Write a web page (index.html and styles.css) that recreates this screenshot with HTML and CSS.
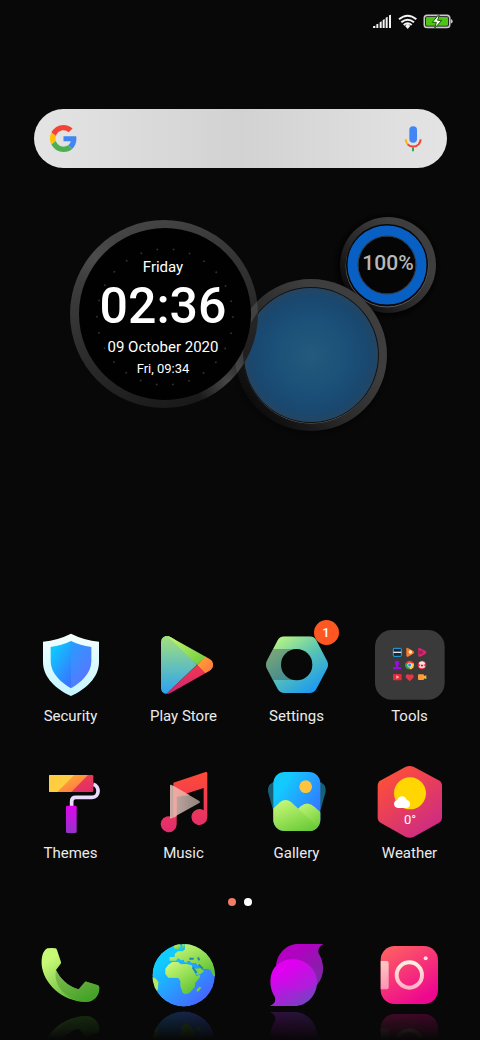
FILE: index.html
```html
<!DOCTYPE html>
<html lang="en">
<head>
    <meta charset="UTF-8">
    <meta name="viewport" content="width=device-width, initial-scale=1.0">
    <title>Home Screen</title>
    <link rel="stylesheet" href="styles.css">
</head>
<body>
    <div class="home">
        <header class="status">
            <svg width="82" height="15" viewBox="36 42 246 45" aria-label="Signal, Wi-Fi, battery charging">
                <g fill="#f2f2f2">
                    <path d="M39 84v-5l7-2v7zM49 73l6-2v13h-6zM59 67l6-3v20h-6zM68 60l6-3v27h-6zM77 53l6-3v34h-6zM87 46l6-2v40h-6z"/>
                    <path d="M136 79a7 7 0 0 1 14 0l-7 8z"/>
                </g>
                <g fill="none" stroke="#f2f2f2" stroke-width="6">
                    <path d="M117 58q26-22 52 0M124 67q19-16 38 0M131 75q12-10 24 0"/>
                </g>
                <rect x="193" y="46" width="76" height="36" rx="8" fill="#080808" stroke="#c9c9c9" stroke-width="5"/>
                <rect x="198" y="51" width="66" height="26" rx="3" fill="#4fc414"/>
                <path d="M272 57q6 1 6 7t-6 7z" fill="#c9c9c9"/>
                <path d="M236 44l-19 23h12l-5 18 21-24h-12l5-17z" fill="#fff" stroke="#175a05" stroke-width="3"/>
            </svg>
        </header>

        <form class="search">
            <button type="button" aria-label="Google">
                <svg width="27" height="27" viewBox="0 0 48 48">
                    <path fill="#f44336" d="M24 9.5c3.54 0 6.71 1.22 9.21 3.6l6.85-6.85C35.9 2.38 30.47 0 24 0 14.62 0 6.51 5.38 2.56 13.22l7.98 6.19C12.43 13.72 17.74 9.5 24 9.5z"/>
                    <path fill="#4285f4" d="M46.98 24.55c0-1.57-.15-3.09-.38-4.55H24v9.02h12.94c-.58 2.96-2.26 5.48-4.78 7.18l7.73 6c4.51-4.18 7.09-10.36 7.09-17.65z"/>
                    <path fill="#ffc107" d="M10.53 28.59c-.48-1.45-.76-2.99-.76-4.59s.27-3.14.76-4.59l-7.98-6.19C.92 16.46 0 20.12 0 24c0 3.88.92 7.54 2.56 10.78l7.97-6.19z"/>
                    <path fill="#4caf50" d="M24 48c6.48 0 11.93-2.13 15.89-5.81l-7.73-6c-2.15 1.45-4.92 2.3-8.16 2.3-6.26 0-11.57-4.22-13.47-9.91l-7.98 6.19C6.51 42.62 14.62 48 24 48z"/>
                </svg>
            </button>
            <input type="text" aria-label="Search">
            <button type="button" aria-label="Voice search">
                <svg width="18" height="26" viewBox="0 0 54 78">
                    <rect x="16" y="1" width="23" height="49" rx="11" fill="#4285f4"/>
                    <path d="M5 40c0 7 3 12 7 16" fill="none" stroke="#ffb300" stroke-width="6"/>
                    <path d="M11 55c9 9 24 9 33 0 3-4 6-8 6-15" fill="none" stroke="#f44336" stroke-width="6"/>
                    <path d="M24 64h6v12h-6z" fill="#34a853"/>
                </svg>
            </button>
        </form>

        <section class="widget">
            <svg class="dials" width="410" height="230" viewBox="35 210 410 230" aria-hidden="true">
                <defs>
                    <linearGradient id="rim" x1=".2" y1="0" x2=".6" y2="1">
                        <stop offset="0" stop-color="#484848"/>
                        <stop offset=".5" stop-color="#303030"/>
                        <stop offset="1" stop-color="#191919"/>
                    </linearGradient>
                    <linearGradient id="rim2" x1=".1" y1=".8" x2=".7" y2=".3">
                        <stop offset="0" stop-color="#0c0c0c"/>
                        <stop offset=".5" stop-color="#2a2a2a"/>
                        <stop offset="1" stop-color="#3e3e3e"/>
                    </linearGradient>
                    <radialGradient id="glow">
                        <stop offset="0" stop-color="#666" stop-opacity=".6"/>
                        <stop offset="1" stop-color="#666" stop-opacity="0"/>
                    </radialGradient>
                    <radialGradient id="glass">
                        <stop offset="0" stop-color="#245a7c"/>
                        <stop offset=".55" stop-color="#1b5078"/>
                        <stop offset=".85" stop-color="#194870"/>
                        <stop offset="1" stop-color="#234562"/>
                    </radialGradient>
                    <radialGradient id="shade">
                        <stop offset=".88" stop-color="#000"/>
                        <stop offset="1" stop-color="#000" stop-opacity="0"/>
                    </radialGradient>
                    <clipPath id="face"><circle cx="164" cy="314" r="94"/></clipPath>
                </defs>
                <circle cx="387" cy="266" r="55" fill="url(#shade)" opacity=".6"/>
                <circle cx="388" cy="265" r="48" fill="url(#rim2)"/>
                <circle cx="387" cy="266" r="41" fill="#111" stroke="#5a5a5a"/>
                <circle cx="387" cy="265" r="41" fill="#070707"/>
                <circle cx="387" cy="265" r="34" fill="#050505" stroke="#0860c4" stroke-width="11"/>
                <circle cx="387" cy="265" r="29" fill="none" stroke="#333"/>

                <circle cx="311" cy="358" r="82" fill="url(#shade)" opacity=".4"/>
                <circle cx="311" cy="355" r="76" fill="url(#rim2)"/>
                <circle cx="311" cy="356" r="67" fill="#111" stroke="#706a62"/>
                <circle cx="311" cy="355" r="68" fill="#111"/>
                <circle cx="311" cy="355" r="67" fill="url(#glass)"/>

                <circle cx="164" cy="314" r="94" fill="url(#rim)"/>
                <g clip-path="url(#face)">
                    <circle cx="311" cy="355" r="72" fill="none" stroke="#fff" stroke-width="8" opacity=".12"/>
                    <circle cx="228" cy="382" r="32" fill="url(#glow)"/>
                    <circle cx="95" cy="258" r="28" fill="url(#glow)" opacity=".5"/>
                </g>
                <circle cx="165" cy="314" r="86" fill="#010101"/>
                <circle cx="165" cy="317" r="68" fill="none" stroke="#303030" stroke-width="2" stroke-linecap="round" stroke-dasharray="0 16.43"/>
            </svg>
            <div class="clock">
                <span class="day">Friday</span>
                <span class="time">02:36</span>
                <span class="date">09 October 2020</span>
                <span class="alarm">Fri, 09:34</span>
            </div>
            <span class="battery">100%</span>
        </section>

        <main class="apps">
            <a class="app" href="#">
                <svg viewBox="27 42 219 216">
                    <defs>
                        <linearGradient id="s1" x1="0" y1="0" x2="0" y2="1"><stop offset="0" stop-color="#f4fffc"/><stop offset="1" stop-color="#c4f5ff"/></linearGradient>
                        <linearGradient id="s2" x1="0" y1="0" x2=".7" y2="1"><stop offset=".2" stop-color="#0fc5ff"/><stop offset="1" stop-color="#3877ff"/></linearGradient>
                        <linearGradient id="s3" x1="0" y1="0" x2=".6" y2="1"><stop offset="0" stop-color="#269eff"/><stop offset="1" stop-color="#5d73ff"/></linearGradient>
                    </defs>
                    <path d="M138 56q40 20 84 24v61c0 48-42 83-84 102-42-19-84-54-84-102V80q44-4 84-24z" fill="url(#s1)"/>
                    <path d="M138 78v142c-30-17-61-45-61-81V96q33-4 61-18z" fill="url(#s2)"/>
                    <path d="M138 78v142c30-17 61-45 61-81V96q-33-4-61-18z" fill="url(#s3)"/>
                </svg>
                <span>Security</span>
            </a>
            <a class="app" href="#">
                <svg viewBox="366 42 219 216">
                    <defs>
                        <linearGradient id="p1" x1="0" y1="0" x2="0" y2="1"><stop offset="0" stop-color="#b3e96c"/><stop offset="1" stop-color="#27a1f5"/></linearGradient>
                        <linearGradient id="p2" x1="0" y1="0" x2="1" y2="1"><stop offset="0" stop-color="#d0ff80"/><stop offset="1" stop-color="#6bc936"/></linearGradient>
                        <linearGradient id="p3" x1="0" y1="0" x2="0" y2="1"><stop offset="0" stop-color="#f4374b"/><stop offset="1" stop-color="#d0247b"/></linearGradient>
                        <linearGradient id="p4" x1="0" y1="0" x2="1" y2="1"><stop offset="0" stop-color="#ffab35"/><stop offset="1" stop-color="#ff6c41"/></linearGradient>
                        <clipPath id="pc"><path d="M408 82c0-16 14-23 28-16l118 66c14 8 14 27 0 35l-118 67c-14 7-28-1-28-15z"/></clipPath>
                    </defs>
                    <g clip-path="url(#pc)">
                        <path d="M400 40h20l96 109-96 92h-20z" fill="url(#p1)"/>
                        <path d="M414 50h20l114 70-32 29z" fill="url(#p2)"/>
                        <path d="M516 149l30 28-110 62h-14z" fill="url(#p3)"/>
                        <path d="M516 149l30-30h30v60h-30z" fill="url(#p4)"/>
                    </g>
                </svg>
                <span>Play Store</span>
            </a>
            <a class="app" href="#">
                <svg viewBox="45 42 219 216">
                    <defs>
                        <linearGradient id="g1" x1=".1" y1="0" x2=".8" y2="1"><stop offset=".05" stop-color="#cbff79"/><stop offset=".5" stop-color="#59c3b4"/><stop offset="1" stop-color="#0d8fff"/></linearGradient>
                        <clipPath id="gc"><path d="M118 64h76q13 0 20 12l32 61q6 12 0 24l-32 61q-7 12-20 12h-76q-13 0-20-12l-32-61q-6-12 0-24l32-61q7-12 20-12z"/></clipPath>
                    </defs>
                    <g clip-path="url(#gc)">
                        <path d="M50 50h210v200H50z" fill="url(#g1)"/>
                        <path d="M50 102h106v93H50z" fill="#47545a" opacity=".45"/>
                    </g>
                    <circle cx="155" cy="149" r="47" fill="#080808"/>
                </svg>
                <em class="badge">1</em>
                <span>Settings</span>
            </a>
            <a class="app" href="#">
                <svg viewBox="384 42 219 216">
                    <rect x="390" y="45" width="209" height="209" rx="50" fill="#3a3a3a"/>
                    <rect x="445" y="100" width="24" height="24" rx="2" fill="#172536" stroke="#28a5e8" stroke-width="3"/>
                    <path d="M445 110h24v4h-24z" fill="#d9edf1"/>
                    <path d="M484 99q2-2 6 1l15 8q5 4 0 8l-16 9q-5 1-5-3z" fill="#fb7b31"/><circle cx="496" cy="111" r="5" fill="#fff3b5"/>
                    <path d="M520 99q2-2 6 1l16 8q5 4 0 8l-16 9q-6 1-6-3z" fill="#df2369"/><path d="M522 107h11v10h-11z" fill="#971f71"/>
                    <circle cx="456" cy="144" r="7" fill="#9d0be3"/><path d="M453 149h6v6l9 2v6h-24v-6l9-2z" fill="#9d0be3"/>
                    <circle cx="494" cy="150" r="13" fill="#f13b32"/><path d="M494 150l-12-6a13 13 0 0 0 9 19z" fill="#2ea84d"/><path d="M494 150v13a13 13 0 0 0 12-18h-12z" fill="#fccd2b"/><circle cx="494" cy="150" r="6" fill="#398be9" stroke="#fff" stroke-width="2"/>
                    <circle cx="531" cy="150" r="13" fill="#e42c3c"/><path d="M521 144q10-11 20 0l-4 7 4 5q-10 8-20 0l4-5z" fill="#fae4dd"/><path d="M526 149h10l-5 7z" fill="#cf1a32"/>
                    <rect x="444" y="177" width="26" height="19" rx="3" fill="#e22a3f"/><path d="M454 181l9 5-9 6z" fill="#ffb0a0"/>
                    <path d="M494 199l-11-11c-4-6 3-15 11-8 8-7 15 2 11 8z" fill="#ed3346"/>
                    <rect x="519" y="178" width="18" height="17" rx="3" fill="#ff9a37"/><path d="M535 184l9-3v11l-9-2z" fill="#ffb33c"/>
                </svg>
                <span>Tools</span>
            </a>
            <a class="app" href="#">
                <svg viewBox="27 33 219 216">
                    <defs>
                        <linearGradient id="t1" x1="0" y1="0" x2="0" y2="1"><stop offset="0" stop-color="#df06ef"/><stop offset="1" stop-color="#9532c8"/></linearGradient>
                        <linearGradient id="t2" x1="0" y1="0" x2="1" y2="1"><stop offset="0" stop-color="#f64742"/><stop offset="1" stop-color="#de2b6c"/></linearGradient>
                        <linearGradient id="t3" x1="0" y1="0" x2="1" y2="1"><stop offset="0" stop-color="#ffbb38"/><stop offset="1" stop-color="#ff6d42"/></linearGradient>
                        <clipPath id="tc"><rect x="72" y="60" width="133" height="51" rx="4"/></clipPath>
                    </defs>
                    <path d="M205 88c19 4 20 39-4 39h-49q-12 0-12 12v16" fill="none" stroke="#eadcfb" stroke-width="11"/>
                    <g clip-path="url(#tc)">
                        <path d="M70 58h140v56H70z" fill="url(#t2)"/>
                        <path d="M70 58h121l-55 56H70z" fill="url(#t3)"/>
                        <path d="M70 58h80l-56 56H70z" fill="#ffce40"/>
                    </g>
                    <rect x="123" y="152" width="32" height="82" rx="4" fill="url(#t1)"/>
                </svg>
                <span>Themes</span>
            </a>
            <a class="app" href="#">
                <svg viewBox="366 33 219 216">
                    <defs>
                        <linearGradient id="m1" x1="0" y1="0" x2="0" y2="1"><stop offset="0" stop-color="#ff4b35"/><stop offset="1" stop-color="#e12c70"/></linearGradient>
                        <linearGradient id="m2" x1="0" y1="0" x2="1" y2="0"><stop offset="0" stop-color="#e8c9bf"/><stop offset="1" stop-color="#aa9793"/></linearGradient>
                    </defs>
                    <path d="M445 83l97-32q5-1 5 4v132a24 24 0 1 1-11-21V99l-81 26v84a24 24 0 1 1-10-21z" fill="url(#m1)"/>
                    <path d="M435 93q0-5 5-3l83 48q4 3 0 6l-83 46q-5 2-5-3z" fill="url(#m2)" opacity=".85"/>
                    <path d="M445 92l50 29-40 4v59l-10 6z" fill="#f5a79e" opacity=".7"/>
                </svg>
                <span>Music</span>
            </a>
            <a class="app" href="#">
                <svg viewBox="45 33 219 216">
                    <defs>
                        <linearGradient id="a1" x1="0" y1=".2" x2="1" y2="1"><stop offset=".15" stop-color="#13caff"/><stop offset=".8" stop-color="#3475ff"/></linearGradient>
                        <linearGradient id="a2" x1="0" y1="0" x2=".6" y2="1"><stop offset="0" stop-color="#d0fc7f"/><stop offset="1" stop-color="#69ca36"/></linearGradient>
                        <clipPath id="ac"><rect x="85" y="51" width="141" height="177" rx="34"/></clipPath>
                    </defs>
                    <path d="M94 79q-27 5-25 31l16 58zM217 79q27 5 25 31l-16 58z" fill="#176078"/>
                    <g clip-path="url(#ac)">
                        <path d="M80 50h150v180H80z" fill="url(#a1)"/>
                        <circle cx="182" cy="95" r="19" fill="#ffc43d"/>
                        <path d="M145 175l22-21q21-18 42 2l22 20v60h-90z" fill="url(#a2)"/>
                        <path d="M80 165l25-23q17-14 34 0l90 84v10H80z" fill="url(#a2)"/>
                    </g>
                </svg>
                <span>Gallery</span>
            </a>
            <a class="app" href="#">
                <svg viewBox="384 33 219 216">
                    <defs>
                        <linearGradient id="w1" x1="0" y1="0" x2=".7" y2="1"><stop offset=".1" stop-color="#ff5035"/><stop offset="1" stop-color="#cd2b84"/></linearGradient>
                    </defs>
                    <path d="M481 36q13-6 26 0l74 40q10 6 10 16v96q0 10-10 16l-74 41q-13 6-26 0l-73-41q-10-6-10-16V92q0-10 10-16z" fill="url(#w1)"/>
                    <circle cx="495" cy="115" r="48" fill="#ffd602"/>
                    <path d="M459 159c-15-1-16-22-2-24 5-16 26-14 28 0 14 2 14 23 0 24z" fill="#fff"/>
                    <text x="495" y="207" text-anchor="middle" fill="#fff" font-size="39">0°</text>
                </svg>
                <span>Weather</span>
            </a>
        </main>

        <div class="pager">
            <i class="dot active"></i>
            <i class="dot"></i>
        </div>

        <nav class="dock">
            <a href="#" aria-label="Phone">
                <svg viewBox="33 153 207 204">
                    <defs>
                        <linearGradient id="d1" x1="0" y1="0" x2=".8" y2="1"><stop offset=".2" stop-color="#c8f976"/><stop offset="1" stop-color="#45a32a"/></linearGradient>
                        <linearGradient id="d2" x1="0" y1="0" x2=".3" y2="1"><stop offset="0" stop-color="#69a044"/><stop offset="1" stop-color="#43a026"/></linearGradient>
                    </defs>
                    <path d="M68 175q12-2 23 0 4 1 5 5l12 36q1 4-2 7l-13 17c12 25 36 50 68 58l18-21q2-3 6-2l34 11q4 2 4 7c0 25-16 42-41 43-73-3-127-57-132-112-1-24 4-42 17-49z" fill="url(#d1)"/>
                    <path d="M93 240c12 25 36 50 68 58l18-21q2-3 6-2l34 11q4 2 4 7c0 25-16 42-41 43-57-4-99-48-89-96z" fill="url(#d2)" opacity=".6"/>
                </svg>
            </a>
            <a href="#" aria-label="Browser">
                <svg viewBox="372 153 207 204">
                    <defs>
                        <linearGradient id="b1" x1=".1" y1=".2" x2=".8" y2="1"><stop offset=".1" stop-color="#10cbff"/><stop offset="1" stop-color="#4a5eff"/></linearGradient>
                        <linearGradient id="b2" x1="0" y1="0" x2=".7" y2="1"><stop offset=".1" stop-color="#c9f778"/><stop offset="1" stop-color="#5fc332"/></linearGradient>
                        <clipPath id="bc"><circle cx="476" cy="256" r="94"/></clipPath>
                    </defs>
                    <g clip-path="url(#bc)">
                        <circle cx="476" cy="256" r="94" fill="url(#b1)"/>
                        <path d="M434 212v-11h15v-9l10-8h14l7-6v-18h45l50 48v50h-10l-8-17-8-4-17-1-12-9-8-8h-13l-4-6h-8l-2 5-8-3v-6l-8 2-10-6-6 7z" fill="url(#b2)"/>
                        <path d="M446 160h20v13l-7 6-12-4zM472 160h7v12l-7 5z" fill="url(#b2)"/>
                        <path d="M421 236l9-12 12-8h17l9 7 17-1 15 4 9 22 6 10 11-4-2 9-13 15-2 13-8 10-9 9-11 3-8-5-7-20v-15l-6-9-30-1-9-11z" fill="url(#b2)"/>
                        <path d="M504 233l11 3 11-2 11 10-10 8-11 3z" fill="#81d63d"/>
                        <path d="M382 261l11 5 7 11-1 20-8 10-14-20z" fill="#b5e766"/>
                        <path d="M515 298l9-8 5 2-7 11-7 2z" fill="#76ce37"/>
                        <path d="M493 206h13M519 202l4 9M503 232l12 17M521 224l12 12" stroke="#178aba" stroke-width="6"/>
                    </g>
                </svg>
            </a>
            <a href="#" aria-label="Messages">
                <svg viewBox="51 153 207 204">
                    <defs>
                        <linearGradient id="c1" x1="0" y1="0" x2=".8" y2="1"><stop offset=".3" stop-color="#b300c2"/><stop offset="1" stop-color="#782aa2"/></linearGradient>
                        <linearGradient id="c2" x1="0" y1="0" x2=".7" y2="1"><stop offset=".3" stop-color="#dc00f0"/><stop offset="1" stop-color="#7840c2"/></linearGradient>
                    </defs>
                    <path d="M235 162q-20 12-14 28c18 30 19 66-4 94l-15 5-98-42-11-16c1-38 30-69 66-69z" fill="url(#c1)"/>
                    <path d="M75 348q22-12 14-28c-18-29-20-80 15-102 44-26 108-1 112 54 2 43-30 76-68 76z" fill="url(#c2)"/>
                    <path d="M94 250a71 71 0 0 0 120 31c-1-67-71-91-110-63q-12 12-10 32z" fill="#e600ef" opacity=".25"/>
                </svg>
            </a>
            <a href="#" aria-label="Camera">
                <svg viewBox="390 153 207 204">
                    <defs>
                        <linearGradient id="k1" x1="0" y1="0" x2=".6" y2="1"><stop offset="0" stop-color="#ff665f"/><stop offset="1" stop-color="#ee078f"/></linearGradient>
                        <linearGradient id="k2" x1="0" y1="0" x2="0" y2="1"><stop offset="0" stop-color="#fff0e0"/><stop offset="1" stop-color="#ffb5c5"/></linearGradient>
                    </defs>
                    <rect x="407" y="168" width="172" height="174" rx="42" fill="url(#k1)"/>
                    <path d="M407 213h18q6 0 6 6v73q0 6-6 6h-18z" fill="url(#k2)" opacity=".75"/>
                    <circle cx="493" cy="255" r="38" fill="none" stroke="url(#k2)" stroke-width="12"/>
                    <circle cx="542" cy="205" r="6" fill="#ffe1dd"/>
                </svg>
            </a>
        </nav>
    </div>
</body>
</html>
```
FILE: styles.css
```css
* {
    box-sizing: border-box;
}
body {
    margin: 0;
    background: #080808;
    color: #fff;
    font-family: Roboto, Arial, sans-serif;
}
.home {
    display: flex;
    flex-direction: column;
    min-height: 100vh;
    overflow: hidden;
}
svg {
    display: block;
}
a {
    color: inherit;
    text-decoration: none;
}
.status {
    display: flex;
    justify-content: flex-end;
    padding: 14px 26px 0;
}
.search {
    display: flex;
    align-items: center;
    height: 59px;
    margin: 80px 33px 0 34px;
    padding: 0 25px 0 16px;
    border-radius: 30px;
    background: linear-gradient(90deg, #e4e4e4, #d2d2d2 50%, #e4e4e4);
}
.search input {
    flex: 1;
    min-width: 0;
    height: 40px;
    padding: 0 12px;
    border: 0;
    outline: 0;
    background: none;
    font: 16px Roboto, sans-serif;
}
.search button {
    padding: 0;
    border: 0;
    background: none;
}
/* Clock, weather glass and battery dials */
.widget {
    position: relative;
    width: 410px;
    margin: 42px auto 0;
}
.clock {
    position: absolute;
    top: 47px;
    left: 34px;
    width: 188px;
    display: flex;
    flex-direction: column;
    align-items: center;
    font-size: 15px;
    line-height: 22px;
}
.day {
    line-height: 20px;
}
.time {
    font-size: 50px;
    font-weight: 500;
    line-height: 59px;
}
.alarm {
    font-size: 13px;
}
.battery {
    position: absolute;
    top: 41px;
    left: 313px;
    width: 80px;
    color: #b8b8b8;
    font-size: 21px;
    font-weight: 500;
    line-height: 24px;
    text-align: center;
}
.apps {
    display: grid;
    grid-template-columns: repeat(4, 1fr);
    row-gap: 40px;
    margin-top: auto;
    padding: 0 14px;
}
.app {
    position: relative;
    display: flex;
    flex-direction: column;
    align-items: center;
    gap: 5px;
    color: #ececec;
    font-size: 15px;
    line-height: 20px;
}
.app svg {
    width: 73px;
    height: 72px;
}
.badge {
    position: absolute;
    top: -9px;
    left: calc(50% + 17px);
    width: 25px;
    height: 25px;
    border-radius: 50%;
    background: #ff5722;
    color: #fff;
    font-size: 13px;
    font-style: normal;
    font-weight: 500;
    line-height: 25px;
    text-align: center;
}
.pager {
    display: flex;
    justify-content: center;
    gap: 8px;
    margin-top: 35px;
}
.dot {
    width: 8px;
    height: 8px;
    border-radius: 50%;
    background: #fff;
}
.dot.active {
    background: #f47c65;
}
.dock {
    display: grid;
    grid-template-columns: repeat(4, 1fr);
    justify-items: center;
    padding: 35px 14px 31px;
}
.dock a {
    -webkit-box-reflect: below 0 linear-gradient(transparent 55%, rgba(255, 255, 255, .28));
}
.dock svg {
    width: 69px;
    height: 68px;
}
```
